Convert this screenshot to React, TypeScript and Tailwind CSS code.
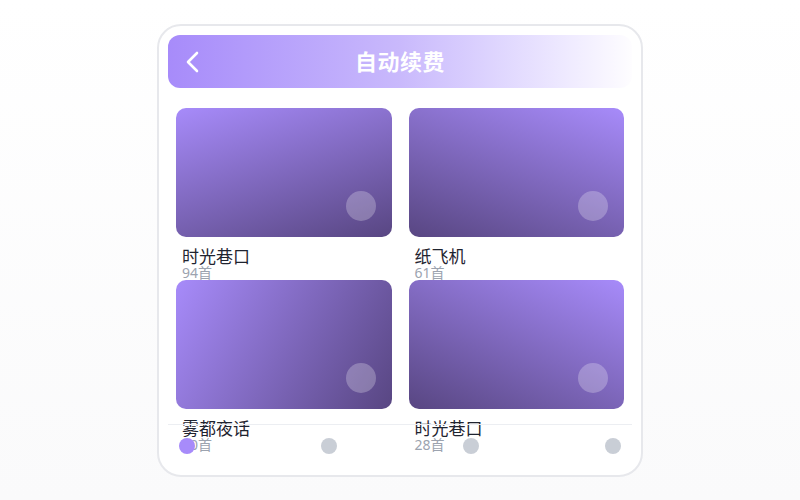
const playlists = [
  { name: '时光巷口', count: '94首', bg: 'bg-[linear-gradient(162deg,#a78bfa,#584682)]' },
  { name: '纸飞机', count: '61首', bg: 'bg-[linear-gradient(200deg,#a78bfa,#584682)]' },
  { name: '雾都夜话', count: '90首', bg: 'bg-[linear-gradient(120deg,#a78bfa,#584682)]' },
  { name: '时光巷口', count: '28首', bg: 'bg-[linear-gradient(205deg,#a78bfa,#584682)]' },
];

const tabs = [true, false, false, false];

export default function App() {
  return (
    <div
      className="w-[800px] h-[500px] flex items-center justify-center bg-linear-to-b from-white to-[#fafafb]"
      style={{ fontFamily: '"Noto Sans", "Noto Sans CJK SC", sans-serif' }}
    >
      <div className="relative w-[486px] h-[453px] bg-white border-2 border-[#e7e8ec] rounded-[24px] p-[9px] overflow-hidden">
        {/* Cabecera */}
        <div className="relative h-[53px] rounded-[12px] flex items-center justify-center bg-linear-to-r from-[#a78bfa] via-[#c9b9fc] to-[#fefdff]">
          <svg
            className="absolute left-[18px] top-[16px]"
            width="14"
            height="22"
            viewBox="0 0 14 22"
            fill="none"
            stroke="white"
            strokeWidth="2.6"
            strokeLinecap="round"
            strokeLinejoin="round"
          >
            <path d="M11 2 L2 11 L11 20" />
          </svg>
          <h1 className="text-white text-[22px] font-bold tracking-[0.5px]">自动续费</h1>
        </div>

        {/* Listas */}
        <div className="grid grid-cols-2 gap-x-[17px] px-[8px] mt-[20px]">
          {playlists.map((p, i) => (
            <div key={i} className="h-[172px] flex flex-col">
              <div className={`relative h-[129px] rounded-[10px] shrink-0 ${p.bg}`}>
                <div className="absolute right-[16px] bottom-[16px] w-[30px] h-[30px] rounded-full bg-white/25" />
              </div>
              <div className="px-[6px] pt-[10px]">
                <div className="text-[17px] leading-[19px] text-[#1f2430]">{p.name}</div>
                <div className="text-[14px] leading-[14px] text-[#9ca3af]">{p.count}</div>
              </div>
            </div>
          ))}
        </div>

        {/* Barra inferior */}
        <div className="absolute left-[9px] right-[9px] bottom-[7px] h-[44px] border-t border-[#eceef2] flex items-center justify-between px-[11px]">
          {tabs.map((active, i) => (
            <span
              key={i}
              className={`w-[16px] h-[16px] rounded-full ${active ? 'bg-[#a78bfa]' : 'bg-[#c9ced6]'}`}
            />
          ))}
        </div>
      </div>
    </div>
  );
}
